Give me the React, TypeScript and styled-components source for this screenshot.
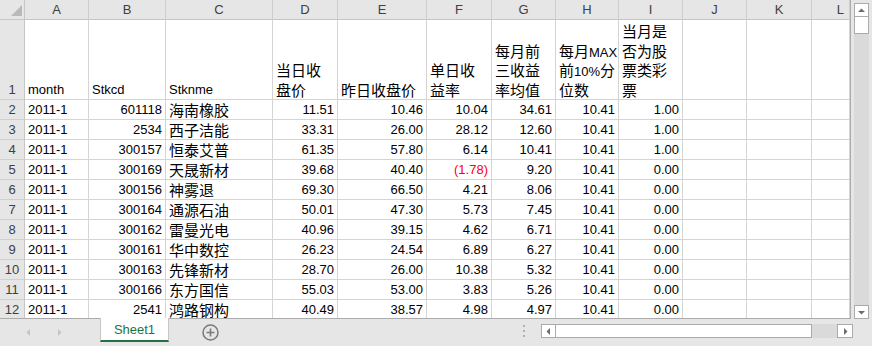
import React from "react";
import styled, { createGlobalStyle } from "styled-components";

const Global = createGlobalStyle`
  html, body { margin: 0; padding: 0; background: #fff; }
  body { font-family: "Liberation Sans", "Noto Sans CJK SC", sans-serif; }
  * { box-sizing: border-box; }
`;

const COLS = [64, 77, 107, 65, 89, 65, 64, 63, 64, 64, 65, 38];
const LETTERS = ["A", "B", "C", "D", "E", "F", "G", "H", "I", "J", "K", "L"];

const Page = styled.div`
  width: 872px;
  height: 346px;
  overflow: hidden;
  display: flex;
  flex-direction: column;
  background: #e6e6e6;
`;

const Top = styled.div`
  display: flex;
  height: 319px;
`;

const Sheet = styled.div`
  width: 851px;
  height: 319px;
  overflow: hidden;
  background: #fff;
  border-right: 1px solid #ababab;
  border-bottom: 1px solid #ababab;
  display: grid;
  grid-template-columns: 25px ${COLS.map((c) => c + "px").join(" ")};
  grid-template-rows: 20px 80px repeat(11, 20px);
`;

const Corner = styled.div`
  background: #e6e6e6;
  border-right: 1px solid #c6c6c6;
  border-bottom: 1px solid #c6c6c6;
  position: relative;
`;

const CornerTri = styled.svg`
  position: absolute;
  left: 0;
  top: 0;
`;

const ColHead = styled.div`
  background: #e6e6e6;
  border-right: 1px solid #cdcdcd;
  border-bottom: 1px solid #c6c6c6;
  display: flex;
  align-items: center;
  justify-content: center;
  font-size: 13px;
  color: #404040;
  line-height: 19px;
`;

const LastColHead = styled(ColHead)`
  justify-content: flex-end;
  padding-right: 5px;
`;

const RowHead = styled.div`
  background: #e6e6e6;
  border-right: 1px solid #c6c6c6;
  border-bottom: 1px solid #d0d0d0;
  display: flex;
  align-items: flex-end;
  justify-content: center;
  font-size: 13px;
  color: #404040;
  line-height: 19px;
`;

const HeadCell = styled.div`
  border-right: 1px solid #d4d4d4;
  border-bottom: 1px solid #d4d4d4;
  display: flex;
  flex-direction: column;
  justify-content: flex-end;
  padding: 0 2px 0 3px;
  font-size: 13px;
  color: #000;
  overflow: hidden;
`;

const HeadLine = styled.span`
  display: flex;
  align-items: baseline;
  height: 19.5px;
  line-height: 19.5px;
  white-space: nowrap;
  flex: none;
`;

const Cell = styled.div<{ $right?: boolean; $red?: boolean }>`
  border-right: 1px solid #d4d4d4;
  border-bottom: 1px solid #d4d4d4;
  display: flex;
  align-items: flex-end;
  justify-content: ${(p) => (p.$right ? "flex-end" : "flex-start")};
  padding: 0 3px;
  font-size: 13px;
  line-height: 19px;
  color: ${(p) => (p.$red ? "#ff0000" : "#000")};
  white-space: nowrap;
  overflow: hidden;
`;

const Cjk = styled.span`
  font-family: "Noto Sans CJK SC", sans-serif;
  font-size: 15px;
  line-height: 19px;
`;

const Lat = styled.span`
  line-height: 19px;
`;

const VScroll = styled.div`
  width: 21px;
  height: 319px;
  padding: 3px 3px 0 3px;
  display: flex;
`;

const VTrack = styled.div`
  width: 15px;
  height: 316px;
  background: #dadada;
  display: flex;
  flex-direction: column;
`;

const ScrollBtn = styled.div<{ $w?: number; $h?: number }>`
  width: ${(p) => p.$w ?? 15}px;
  height: ${(p) => p.$h ?? 14}px;
  background: #fff;
  border: 1px solid #ababab;
  display: flex;
  align-items: center;
  justify-content: center;
  flex: none;
`;

const VThumb = styled.div`
  width: 15px;
  height: 17px;
  background: #fff;
  border: 1px solid #ababab;
  border-top: none;
`;

const VSpacer = styled.div`
  flex: 1;
`;

const TabBar = styled.div`
  height: 27px;
  display: flex;
  align-items: flex-start;
  background: #e6e6e6;
`;

const NavArrows = styled.div`
  width: 100px;
  height: 26px;
  display: flex;
  align-items: center;
  padding-left: 25px;
  gap: 24px;
`;

const Tab = styled.div`
  width: 69px;
  height: 24px;
  background: #fff;
  border-left: 1px solid #c6c6c6;
  border-right: 1px solid #c6c6c6;
  border-bottom: 2px solid #217346;
  margin-top: -1px;
  display: flex;
  align-items: center;
  justify-content: center;
  color: #217346;
  font-size: 13px;
  padding-top: 1px;
`;

const AddBtn = styled.div`
  margin-left: 33px;
  margin-top: 5px;
  width: 17px;
  height: 17px;
  display: flex;
`;

const Dots = styled.div`
  margin-left: 304px;
  margin-top: 6px;
  width: 3px;
  height: 12px;
  display: flex;
  flex-direction: column;
  justify-content: space-between;
`;

const Dot = styled.span`
  width: 2px;
  height: 2px;
  background: #b0b0b0;
`;

const HScroll = styled.div`
  margin-left: 15px;
  margin-top: 5px;
  width: 312px;
  height: 14px;
  display: flex;
  background: #dadada;
`;

const HThumb = styled.div`
  width: 256px;
  height: 14px;
  background: #fff;
  border: 1px solid #ababab;
  border-left: none;
`;

const HSpacer = styled.div`
  flex: 1;
`;

const isCjk = (ch: string) => /[\u3000-\u9fff\uff00-\uffef]/.test(ch);

function Txt({ s }: { s: string }) {
  const runs: { cjk: boolean; t: string }[] = [];
  for (const ch of s) {
    const c = isCjk(ch);
    const last = runs[runs.length - 1];
    if (last && last.cjk === c) last.t += ch;
    else runs.push({ cjk: c, t: ch });
  }
  return (
    <>
      {runs.map((r, i) => (r.cjk ? <Cjk key={i}>{r.t}</Cjk> : <Lat key={i}>{r.t}</Lat>))}
    </>
  );
}

const HEADERS: string[][] = [
  ["month"],
  ["Stkcd"],
  ["Stknme"],
  ["当日收", "盘价"],
  ["昨日收盘价"],
  ["单日收", "益率"],
  ["每月前", "三收益", "率均值"],
  ["每月MAX", "前10%分", "位数"],
  ["当月是", "否为股", "票类彩", "票"],
  [],
  [],
  [],
];

const DATA: string[][] = [
  ["601118", "海南橡胶", "11.51", "10.46", "10.04", "34.61", "10.41", "1.00"],
  ["2534", "西子洁能", "33.31", "26.00", "28.12", "12.60", "10.41", "1.00"],
  ["300157", "恒泰艾普", "61.35", "57.80", "6.14", "10.41", "10.41", "1.00"],
  ["300169", "天晟新材", "39.68", "40.40", "(1.78)", "9.20", "10.41", "0.00"],
  ["300156", "神雾退", "69.30", "66.50", "4.21", "8.06", "10.41", "0.00"],
  ["300164", "通源石油", "50.01", "47.30", "5.73", "7.45", "10.41", "0.00"],
  ["300162", "雷曼光电", "40.96", "39.15", "4.62", "6.71", "10.41", "0.00"],
  ["300161", "华中数控", "26.23", "24.54", "6.89", "6.27", "10.41", "0.00"],
  ["300163", "先锋新材", "28.70", "26.00", "10.38", "5.32", "10.41", "0.00"],
  ["300166", "东方国信", "55.03", "53.00", "3.83", "5.26", "10.41", "0.00"],
  ["2541", "鸿路钢构", "40.49", "38.57", "4.98", "4.97", "10.41", "0.00"],
];

const Arrow = ({ dir, color = "#6d6d6d", size = 7 }: { dir: "up" | "down" | "left" | "right"; color?: string; size?: number }) => {
  const pts: Record<string, string> = {
    up: "0,5 3.5,1.5 7,5",
    down: "0,2 3.5,5.5 7,2",
    left: "5,0 1.5,3.5 5,7",
    right: "2,0 5.5,3.5 2,7",
  };
  return (
    <svg width={size} height={size} viewBox="0 0 7 7">
      <polygon points={pts[dir]} fill={color} />
    </svg>
  );
};

export default function App() {
  return (
    <Page>
      <Global />
      <Top>
        <Sheet>
          <Corner>
            <CornerTri width="25" height="20">
              <polygon points="22,5 22,16 11,16" fill="#b9b9b9" />
            </CornerTri>
          </Corner>
          {LETTERS.map((l, i) =>
            i === LETTERS.length - 1 ? (
              <LastColHead key={l}>{l}</LastColHead>
            ) : (
              <ColHead key={l}>{l}</ColHead>
            )
          )}
          <RowHead>1</RowHead>
          {HEADERS.map((lines, i) => (
            <HeadCell key={i}>
              {lines.map((ln, j) => (
                <HeadLine key={j}>
                  <Txt s={ln} />
                </HeadLine>
              ))}
            </HeadCell>
          ))}
          {DATA.map((row, r) => (
            <React.Fragment key={r}>
              <RowHead>{r + 2}</RowHead>
              <Cell>2011-1</Cell>
              <Cell $right>{row[0]}</Cell>
              <Cell>
                <Cjk>{row[1]}</Cjk>
              </Cell>
              {row.slice(2).map((v, c) => (
                <Cell key={c} $right $red={v.startsWith("(")}>
                  {v}
                </Cell>
              ))}
              <Cell />
              <Cell />
              <Cell />
            </React.Fragment>
          ))}
        </Sheet>
        <VScroll>
          <VTrack>
            <ScrollBtn>
              <Arrow dir="up" />
            </ScrollBtn>
            <VThumb />
            <VSpacer />
            <ScrollBtn>
              <Arrow dir="down" />
            </ScrollBtn>
          </VTrack>
        </VScroll>
      </Top>
      <TabBar>
        <NavArrows>
          <Arrow dir="left" color="#c4c4c4" />
          <Arrow dir="right" color="#c4c4c4" />
        </NavArrows>
        <Tab>Sheet1</Tab>
        <AddBtn>
          <svg width="17" height="17" viewBox="0 0 17 17">
            <circle cx="8.5" cy="8.5" r="7.5" fill="none" stroke="#7a7a7a" strokeWidth="1.5" />
            <path d="M8.5 4.5v8M4.5 8.5h8" stroke="#7a7a7a" strokeWidth="1.6" />
          </svg>
        </AddBtn>
        <Dots>
          <Dot />
          <Dot />
          <Dot />
        </Dots>
        <HScroll>
          <ScrollBtn $w={15} $h={14}>
            <Arrow dir="left" />
          </ScrollBtn>
          <HThumb />
          <HSpacer />
          <ScrollBtn $w={16} $h={14}>
            <Arrow dir="right" />
          </ScrollBtn>
        </HScroll>
      </TabBar>
    </Page>
  );
}
